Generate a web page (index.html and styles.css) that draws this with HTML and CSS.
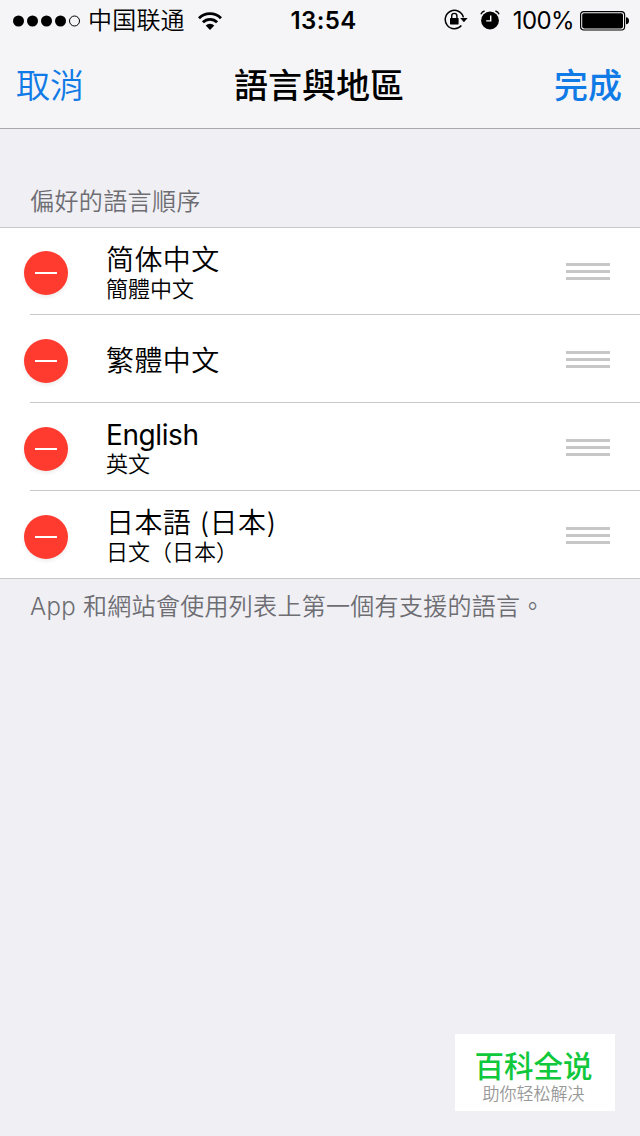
FILE: index.html
```html
<!DOCTYPE html>
<html lang="zh-Hant">
<head>
  <meta charset="utf-8">
  <title>語言與地區</title>
  <link rel="stylesheet" href="styles.css">
</head>
<body>
  <header>
    <div class="status-bar">
      <div class="status-left">
        <svg class="signal" width="68" height="12" viewBox="0 0 68 12">
          <circle cx="5.5" cy="6" r="5.5" />
          <circle cx="19.5" cy="6" r="5.5" />
          <circle cx="33.5" cy="6" r="5.5" />
          <circle cx="47.5" cy="6" r="5.5" />
          <circle cx="61.5" cy="6" r="5" fill="none" stroke="#000" />
        </svg>
        <span class="carrier" lang="zh-Hans">中国联通</span>
        <svg class="wifi" width="24" height="18" viewBox="0 0 24 18">
          <g fill="none" stroke="#000" stroke-width="2.8">
            <path d="M1 6.2a15.6 15.6 0 0 1 22 0" />
            <path d="M4.9 10.3a10 10 0 0 1 14.2 0" />
          </g>
          <path d="M7.7 13.6a6.1 6.1 0 0 1 8.6 0L12 18z" />
        </svg>
      </div>
      <span class="time">13:54</span>
      <div class="status-right">
        <svg class="lock" width="24" height="22" viewBox="0 0 24 22">
          <path d="M17.4 16.6A9.2 9.2 0 1 1 19.4 8.4" fill="none" stroke="#000" stroke-width="1.5" />
          <path d="M16.2 9h7.4l-3.7 4.2z" />
          <rect x="6" y="9" width="8.6" height="6.4" rx=".6" />
          <path d="M7.7 9.5V7a2.6 2.6 0 0 1 5.2 0v2.5" fill="none" stroke="#000" stroke-width="1.4" />
        </svg>
        <svg class="alarm" width="20" height="20" viewBox="0 0 20 20">
          <circle cx="10" cy="10.5" r="8.9" />
          <path d="M.9 4.2A5 5 0 0 1 4.6 1M19.1 4.2a5 5 0 0 0-3.7-3.2" fill="none" stroke="#000" stroke-width="1.3" />
          <path d="M10.7 5.4v5.5H6.2" fill="none" stroke="#fff" stroke-width="1.4" />
        </svg>
        <span class="percent">100%</span>
        <svg class="battery" width="50" height="20" viewBox="0 0 50 20">
          <rect x=".6" y=".6" width="44" height="18.4" rx="3.2" fill="none" stroke="#000" stroke-width="1.2" />
          <rect x="2.2" y="2.2" width="40.8" height="15.2" rx="1.8" />
          <path d="M46 6.3q3 .4 3 3.5t-3 3.5z" />
        </svg>
      </div>
    </div>
    <div class="nav-bar">
      <span class="nav-button">取消</span>
      <h1>語言與地區</h1>
      <span class="nav-button done">完成</span>
    </div>
  </header>

  <main>
    <h2>偏好的語言順序</h2>
    <ul class="languages">
      <li>
        <span class="remove"></span>
        <div class="cell">
          <div class="names">
            <div class="name" lang="zh-Hans">简体中文</div>
            <div class="subtitle">簡體中文</div>
          </div>
          <span class="handle"></span>
        </div>
      </li>
      <li>
        <span class="remove"></span>
        <div class="cell">
          <div class="names single">
            <div class="name">繁體中文</div>
          </div>
          <span class="handle"></span>
        </div>
      </li>
      <li>
        <span class="remove"></span>
        <div class="cell">
          <div class="names">
            <div class="name latin">English</div>
            <div class="subtitle">英文</div>
          </div>
          <span class="handle"></span>
        </div>
      </li>
      <li>
        <span class="remove"></span>
        <div class="cell">
          <div class="names">
            <div class="name" lang="ja">日本語 (日本)</div>
            <div class="subtitle" lang="zh-Hans">日文（日本）</div>
          </div>
          <span class="handle"></span>
        </div>
      </li>
    </ul>
    <p class="note">App 和網站會使用列表上第一個有支援的語言。</p>
  </main>

  <div class="badge" lang="zh-Hans">
    <div class="badge-title">百科全说</div>
    <div class="badge-text">助你轻松解决</div>
  </div>
</body>
</html>
```

FILE: styles.css
```css
* {
  box-sizing: border-box;
}
body {
  display: flex;
  flex-direction: column;
  height: 1136px;
  margin: 0;
  background: #efeff4;
  color: #000;
  font-family: Inter, "Noto Sans CJK TC", sans-serif;
  font-weight: 350;
  white-space: nowrap;
}
h1, h2, p, ul {
  margin: 0;
  padding: 0;
}
[lang="zh-Hans"] {
  font-family: Inter, "Noto Sans CJK SC", sans-serif;
}
[lang="ja"] {
  font-family: Inter, "Noto Sans CJK JP", sans-serif;
}

header {
  height: 129px;
  background: #f5f5f7;
  border-bottom: 1px solid #a8a8ad;
}
.status-bar {
  display: grid;
  grid-template-columns: 1fr auto 1fr;
  align-items: center;
  height: 40px;
  padding: 0 10px 0 13px;
  font-size: 24px;
  line-height: 40px;
}
.status-left, .status-right {
  display: flex;
  align-items: center;
  height: 41px;
}
.status-right {
  justify-content: flex-end;
}
.carrier {
  margin: 1px 0 0 7px;
  letter-spacing: .2px;
}
.wifi {
  margin-left: 13px;
}
.time {
  margin-left: 4px;
  font-size: 24px;
  font-weight: 600;
  letter-spacing: .4px;
}
.lock {
  margin-top: -1px;
}
.alarm {
  margin: -1px 0 0 12px;
}
.percent {
  margin: 0 6px 0 13px;
  font-weight: 380;
  letter-spacing: -.6px;
}

.nav-bar {
  display: grid;
  grid-template-columns: 1fr auto 1fr;
  height: 88px;
  padding: 0 18px 0 16px;
  font-size: 34px;
  line-height: 91px;
}
.nav-button {
  color: #107be6;
}
.nav-button.done {
  font-weight: 500;
  text-align: right;
}
h1 {
  font-size: 34px;
  font-weight: 500;
}

h2 {
  height: 98px;
  padding: 52px 30px 0;
  color: #6d6d72;
  font-size: 24px;
  font-weight: 350;
  letter-spacing: .4px;
  line-height: 41px;
}
.languages {
  list-style: none;
  background: #fff;
  border-top: 1px solid #c8c7cc;
  border-bottom: 1px solid #c8c7cc;
}
.languages li {
  display: flex;
  align-items: center;
  height: 88px;
  padding-left: 24px;
}
.languages li:first-child {
  height: 87px;
}
.languages li:last-child {
  height: 87px;
  padding-top: 1px;
}
.remove {
  display: flex;
  align-items: center;
  justify-content: center;
  width: 44px;
  height: 44px;
  margin-top: 3px;
  border-radius: 50%;
  background: #ff3b30;
  box-shadow: 0 2px 4px rgba(0, 0, 0, .08);
}
.remove::before {
  content: "";
  width: 22px;
  height: 2px;
  background: #fff;
}
.cell {
  display: flex;
  flex: 1;
  align-items: center;
  justify-content: space-between;
  height: 100%;
  margin-left: -38px;
  padding: 0 30px 0 76px;
  background: linear-gradient(#c8c7cc, #c8c7cc) bottom / 100% 1px no-repeat;
}
li:last-child .cell {
  background: none;
}
.name {
  font-size: 28px;
  letter-spacing: .4px;
  line-height: 36px;
}
.latin {
  font-weight: 400;
  letter-spacing: -.4px;
}
.single {
  padding-top: 4px;
}
.subtitle {
  margin: -1px 0 1px;
  font-size: 22px;
  line-height: 24px;
}
.handle {
  width: 44px;
  height: 17px;
  border-top: 3px solid #c7c7c7;
  border-bottom: 3px solid #c7c7c7;
  background: linear-gradient(#c7c7c7, #c7c7c7) center / 100% 3px no-repeat;
}
.note {
  padding: 7px 30px 0;
  color: #6d6d72;
  font-size: 24px;
  letter-spacing: .3px;
  line-height: 41px;
}

.badge {
  align-self: flex-end;
  width: 160px;
  height: 77px;
  margin: auto 25px 25px 0;
  padding: 15px 3px 0 0;
  background: #fff;
  text-align: center;
}
.badge-title {
  color: #0fc83c;
  font-size: 29.5px;
  font-weight: 500;
  line-height: 34px;
}
.badge-text {
  color: #999;
  font-size: 17px;
  line-height: 22px;
}
```
